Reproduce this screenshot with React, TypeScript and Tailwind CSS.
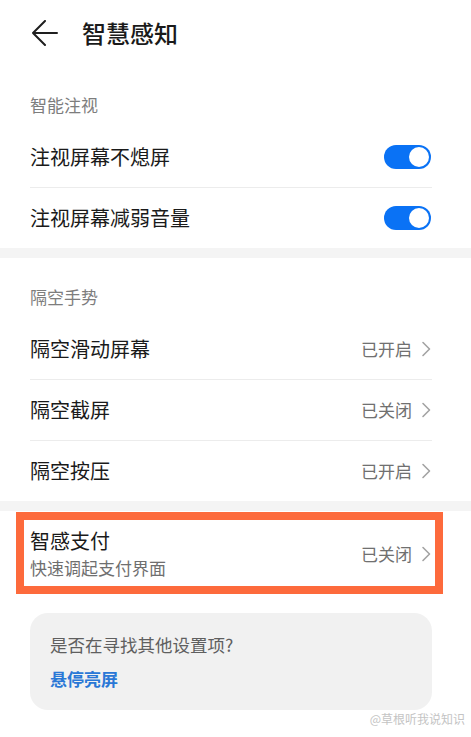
import React from "react";

const FONT = { fontFamily: '"Noto Sans CJK SC", "Noto Sans", sans-serif' };

function Toggle() {
  return (
    <div className="relative h-[24px] w-[47px] rounded-full bg-[#0a72f5]">
      <div className="absolute right-[2px] top-[2px] h-[20px] w-[20px] rounded-full bg-white" />
    </div>
  );
}

function Chevron() {
  return (
    <svg width="10" height="16" viewBox="0 0 10 16" fill="none">
      <path d="M2 1.5 L8.5 8 L2 14.5" stroke="#a3a3a3" strokeWidth="1.6" strokeLinecap="round" strokeLinejoin="round" />
    </svg>
  );
}

function SectionHeader({ text }: { text: string }) {
  return (
    <div className="flex h-[61px] items-end px-[30px] pb-[10px]">
      <span className="text-[17px] leading-[24px] text-[#7d7d7d]">{text}</span>
    </div>
  );
}

function Divider() {
  return <div className="ml-[30px] mr-[39px] h-px bg-[#ececec]" />;
}

function ToggleRow({ label }: { label: string }) {
  return (
    <div className="flex h-[60px] items-center justify-between pl-[30px] pr-[40px]">
      <span className="text-[20px] text-[#1a1a1a]">{label}</span>
      <Toggle />
    </div>
  );
}

function LinkRow({ label, value }: { label: string; value: string }) {
  return (
    <div className="flex h-[60px] items-center justify-between pl-[30px] pr-[40px]">
      <span className="text-[20px] text-[#1a1a1a]">{label}</span>
      <div className="flex items-center gap-[9px]">
        <span className="text-[17px] text-[#707070]">{value}</span>
        <Chevron />
      </div>
    </div>
  );
}

function Band() {
  return <div className="h-[10px] bg-[#f4f4f4]" />;
}

export default function App() {
  return (
    <div className="min-h-[737px] w-[471px] overflow-hidden bg-white" style={FONT}>
      {/* Top bar */}
      <div className="flex h-[66px] items-center gap-[24px] pl-[32px]">
        <svg width="26" height="26" viewBox="0 0 26 26" fill="none">
          <path d="M1 13 H25 M1 13 L13 1 M1 13 L13 25" stroke="#1f1f1f" strokeWidth="2" strokeLinecap="round" strokeLinejoin="round" />
        </svg>
        <span className="text-[24px] font-medium leading-none text-[#1a1a1a]">智慧感知</span>
      </div>

      <SectionHeader text="智能注视" />
      <ToggleRow label="注视屏幕不熄屏" />
      <Divider />
      <ToggleRow label="注视屏幕减弱音量" />
      <Band />

      <SectionHeader text="隔空手势" />
      <LinkRow label="隔空滑动屏幕" value="已开启" />
      <Divider />
      <LinkRow label="隔空截屏" value="已关闭" />
      <Divider />
      <LinkRow label="隔空按压" value="已开启" />
      <Band />

      {/* Smart pay row with highlight */}
      <div className="relative flex h-[86px] items-center justify-between pl-[30px] pr-[40px]">
        <div className="flex flex-col">
          <span className="text-[20px] leading-[28px] text-[#1a1a1a]">智感支付</span>
          <span className="text-[17px] leading-[26px] text-[#6f6f6f]">快速调起支付界面</span>
        </div>
        <div className="flex items-center gap-[9px]">
          <span className="text-[17px] text-[#707070]">已关闭</span>
          <Chevron />
        </div>
        <div className="pointer-events-none absolute left-[16px] top-[1px] h-[82px] w-[427px] border-[8px] border-[#fd6a3c]" />
      </div>

      {/* Suggestion card */}
      <div className="ml-[30px] mr-[39px] mt-[16px] flex h-[97px] flex-col justify-center gap-[10px] rounded-[18px] bg-[#f1f1f1] px-[20px]">
        <span className="text-[17.5px] leading-[24px] text-[#5f5f5f]">是否在寻找其他设置项?</span>
        <span className="text-[17px] font-semibold leading-[24px] text-[#2a78d6]">悬停亮屏</span>
      </div>

      <div className="flex justify-end pr-[6px] pt-[1px]">
        <span className="text-[12px] leading-[16px] text-[#c4c4c4]">@草根听我说知识</span>
      </div>
    </div>
  );
}
